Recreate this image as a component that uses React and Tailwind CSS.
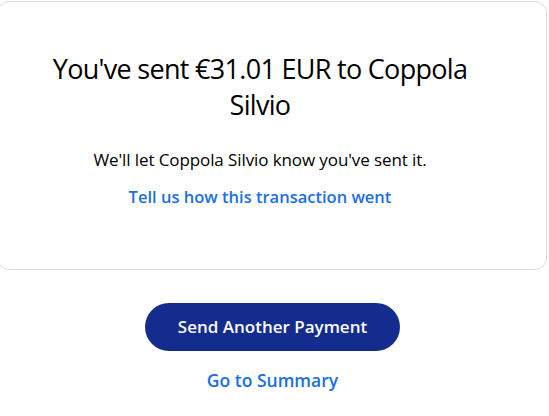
export default function App() {
  return (
    <div
      className="w-[549px] h-[416px] bg-white overflow-hidden"
      style={{ fontFamily: '"Open Sans", "Liberation Sans", sans-serif' }}
    >
      <div className="ml-[-3px] mt-[1px] w-[550px] h-[269px] border border-[#dcdcd5] rounded-[12px] bg-white flex flex-col items-center pt-[49px] pr-[24px]">
        <h1 className="text-[27px] leading-[36px] text-[#000] text-center px-12 tracking-[-0.7px]">
          You've sent €31.01 EUR to Coppola Silvio
        </h1>
        <p className="mt-[25px] text-[17px] leading-[24px] text-[#000] tracking-[-0.1px]">
          We'll let Coppola Silvio know you've sent it.
        </p>
        <a className="mt-[13px] text-[16.5px] leading-[24px] font-semibold text-[#1a6fe6]">
          Tell us how this transaction went
        </a>
      </div>
      <div className="flex flex-col items-center pr-[4px]">
        <button className="mt-[33px] w-[255px] h-[48px] rounded-full bg-[#142c8e] text-white text-[17px] font-semibold">
          Send Another Payment
        </button>
        <a className="mt-[17px] text-[17.5px] leading-[24px] font-semibold text-[#1a6fe6]">
          Go to Summary
        </a>
      </div>
    </div>
  );
}
